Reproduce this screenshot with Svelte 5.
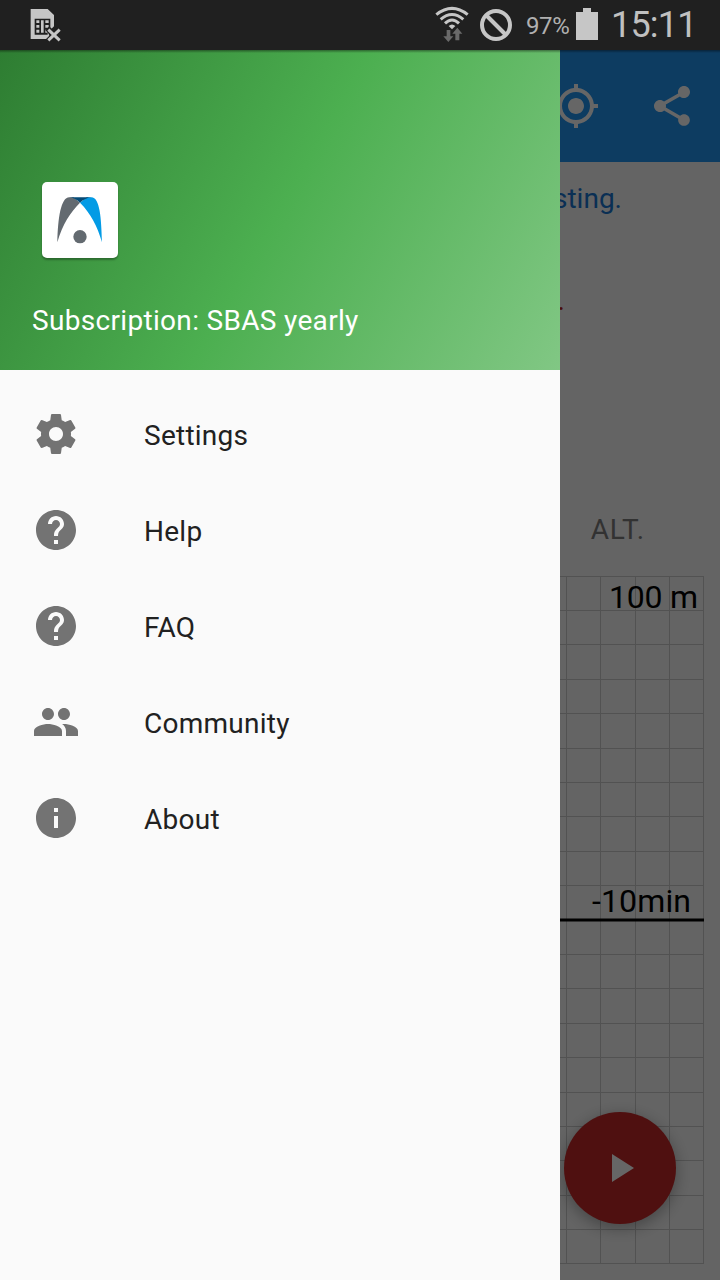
<script lang="ts">
	interface MenuItem {
		label: string;
		icon: string;
	}

	const help =
		'M12 2C6.48 2 2 6.48 2 12s4.48 10 10 10 10-4.48 10-10S17.52 2 12 2zm1 17h-2v-2h2v2zm2.07-7.75l-.9.92C13.45 12.9 13 13.5 13 15h-2v-.5c0-1.1.45-2.1 1.17-2.83l1.24-1.26c.37-.36.59-.86.59-1.41 0-1.1-.9-2-2-2s-2 .9-2 2H8c0-2.21 1.79-4 4-4s4 1.79 4 4c0 .88-.36 1.68-.93 2.25z';

	const items: MenuItem[] = [
		{
			label: 'Settings',
			icon: 'M19.43 12.98c.04-.32.07-.64.07-.98s-.03-.66-.07-.98l2.11-1.65c.19-.15.24-.42.12-.64l-2-3.46c-.12-.22-.39-.3-.61-.22l-2.49 1c-.52-.4-1.08-.73-1.69-.98l-.38-2.65C14.46 2.18 14.25 2 14 2h-4c-.25 0-.46.18-.49.42l-.38 2.65c-.61.25-1.17.59-1.69.98l-2.49-1c-.23-.09-.49 0-.61.22l-2 3.46c-.13.22-.07.49.12.64l2.11 1.65c-.04.32-.07.65-.07.98s.03.66.07.98l-2.11 1.65c-.19.15-.24.42-.12.64l2 3.46c.12.22.39.3.61.22l2.49-1c.52.4 1.08.73 1.69.98l.38 2.65c.03.24.24.42.49.42h4c.25 0 .46-.18.49-.42l.38-2.65c.61-.25 1.17-.59 1.69-.98l2.49 1c.23.09.49 0 .61-.22l2-3.46c.12-.22.07-.49-.12-.64l-2.11-1.65zM12 15.5c-1.93 0-3.5-1.57-3.5-3.5s1.57-3.5 3.5-3.5 3.5 1.57 3.5 3.5-1.57 3.5-3.5 3.5z',
		},
		{ label: 'Help', icon: help },
		{ label: 'FAQ', icon: help },
		{
			label: 'Community',
			icon: 'M16 11c1.66 0 2.99-1.34 2.99-3S17.66 5 16 5c-1.66 0-3 1.34-3 3s1.34 3 3 3zm-8 0c1.66 0 2.99-1.34 2.99-3S9.66 5 8 5C6.34 5 5 6.34 5 8s1.34 3 3 3zm0 2c-2.33 0-7 1.17-7 3.5V19h14v-2.5c0-2.33-4.67-3.5-7-3.5zm8 0c-.29 0-.62.02-.97.05 1.16.84 1.97 1.97 1.97 3.45V19h6v-2.5c0-2.33-4.67-3.5-7-3.5z',
		},
		{
			label: 'About',
			icon: 'M12 2C6.48 2 2 6.48 2 12s4.48 10 10 10 10-4.48 10-10S17.52 2 12 2zm1 15h-2v-6h2v6zm0-8h-2V7h2v2z',
		},
	];

	// 20 x 20 cells on a 688px square
	const cell = 34.4;
	const lines = Array.from({ length: 21 }, (_, i) => Math.min(Math.floor(i * cell) + 0.5, 687.5));
</script>

<div class="phone">
	<header class="status-bar">
		<svg class="sim" width="32" height="34" viewBox="0 0 96 102">
			<path fill="#c6c6c6" d="M2 0h51l19 18v34L54 70l8 20H2z" />
			<path fill="#202020" d="M14 29h47v26l-8 8v14H14z" />
			<path fill="#c6c6c6" d="M19 34h9v8h-9zM19 48h9v8h-9zM19 62h9v9h-9zM33 34h8v37h-8zM46 34h10v8H46zM46 48h10v8H46zM46 62h6v9h-6z" />
			<path stroke="#202020" stroke-width="17" d="M52 58l40 40M92 58L52 98" />
			<path stroke="#c6c6c6" stroke-width="9" d="M55 62l34 32M89 62L55 94" />
		</svg>
		<div class="status-right">
			<svg class="wifi" width="34" height="38" viewBox="0 0 102 114">
				<g fill="none" stroke="#c6c6c6" stroke-width="9">
					<path d="M4 29Q51-9 98 29" />
					<path d="M17 43Q51 14 85 43" />
					<path d="M30 55Q51 35 72 55" />
				</g>
				<path fill="#c6c6c6" d="M41 63q10-9 20 0L51 73z" />
				<path fill="#6a6a6a" d="M35 75h11v19h9l-15 17-15-17h10zM61 106V86h-9l15-18 15 18h-9v20z" />
			</svg>
			<svg class="blocked" width="32" height="32" viewBox="0 0 32 32" fill="none" stroke="#c6c6c6" stroke-width="4">
				<circle cx="16" cy="16" r="14" /><path d="M6 6l20 20" />
			</svg>
			<span class="percent">97%</span>
			<svg width="22" height="32" viewBox="0 0 22 32"><path fill="#c6c6c6" d="M7 0h8v4h7v28H0V4h7z" /></svg>
			<span class="clock">15:11</span>
		</div>
	</header>

	<div class="window">
		<main class="screen">
			<div class="toolbar">
				<svg width="48" height="48" viewBox="0 0 24 24" fill="#fff">
					<path d="M12 8c-2.21 0-4 1.79-4 4s1.79 4 4 4 4-1.79 4-4-1.79-4-4-4zm8.94 3c-.46-4.17-3.77-7.48-7.94-7.94V1h-2v2.06C6.83 3.52 3.52 6.83 3.06 11H1v2h2.06c.46 4.17 3.77 7.48 7.94 7.94V23h2v-2.06c4.17-.46 7.48-3.77 7.94-7.94H23v-2h-2.06zM12 19c-3.87 0-7-3.13-7-7s3.13-7 7-7 7 3.13 7 7-3.13 7-7 7z" />
				</svg>
				<svg width="48" height="48" viewBox="0 0 24 24" fill="#fff">
					<path d="M18 16.08c-.76 0-1.44.3-1.96.77L8.91 12.7c.05-.23.09-.46.09-.7s-.04-.47-.09-.7l7.05-4.11c.54.5 1.25.81 2.04.81 1.66 0 3-1.34 3-3s-1.34-3-3-3-3 1.34-3 3c0 .24.04.47.09.7L8.04 9.81C7.5 9.31 6.79 9 6 9c-1.66 0-3 1.34-3 3s1.34 3 3 3c.79 0 1.5-.31 2.04-.81l7.12 4.16c-.05.21-.08.43-.08.65 0 1.61 1.31 2.92 2.92 2.92 1.61 0 2.92-1.31 2.92-2.92s-1.31-2.92-2.92-2.92z" />
				</svg>
			</div>
			<p class="notice">sting.</p>
			<p class="warning">.</p>
			<div class="tab">ALT.</div>
			<svg class="chart" width="688" height="688" viewBox="0 0 688 688">
				<g stroke="#ccc">
					{#each lines as p}
						<line x1={p} y1="0" x2={p} y2="688" />
						<line x1="0" y1={p} x2="688" y2={p} />
					{/each}
				</g>
				<line x1="0" y1="344" x2="688" y2="344" stroke="#000" stroke-width="3" />
				<text x="682" y="32" text-anchor="end" textLength="89">100 m</text>
				<text x="675" y="336" text-anchor="end" textLength="99">-10min</text>
			</svg>
			<button class="fab" aria-label="Start">
				<svg width="22" height="28" viewBox="0 0 22 28" fill="#fff"><path d="M0 0v28l22-14z" /></svg>
			</button>
		</main>

		<div class="scrim"></div>

		<nav class="drawer">
			<div class="drawer-header">
				<svg class="logo" width="76" height="76" viewBox="0 0 228 228">
					<path fill="#636a70" d="M46 181C48 110 56 46 82 46h12l20 16C85 92 62 125 46 181z" />
					<path fill="#039be5" d="M180 181C178 110 174 46 148 46h-14l-20 16c32 32 52 70 66 119z" />
					<path fill="#054a75" d="M82 46h66c-12 1-24 7-34 16-10-9-20-15-32-16z" />
					<circle cx="114" cy="164" r="20" fill="#636a70" />
				</svg>
				<span class="subscription">Subscription: SBAS yearly</span>
			</div>
			<ul class="menu">
				{#each items as item}
					<li>
						<svg width="48" height="48" viewBox="0 0 24 24" fill="#737373"><path d={item.icon} /></svg>
						<span>{item.label}</span>
					</li>
				{/each}
			</ul>
		</nav>
	</div>
</div>

<style>
	:global(body) {
		margin: 0;
	}

	.phone {
		display: flex;
		flex-direction: column;
		width: 720px;
		height: 1280px;
		overflow: hidden;
		font-family: Roboto, sans-serif;
		font-size: 28px;
	}

	svg {
		display: block;
		flex-shrink: 0;
	}

	.status-bar {
		display: flex;
		justify-content: space-between;
		height: 50px;
		flex-shrink: 0;
		box-sizing: border-box;
		padding: 0 25px 0 30px;
		background: #202020;
		color: #c0c0c0;
	}

	.sim {
		margin-top: 9px;
	}

	.status-right {
		display: flex;
		align-items: center;
		height: 48px;
	}

	.wifi {
		margin-right: 11px;
	}

	.blocked {
		margin: 2px 14px 0 0;
	}

	.percent {
		width: 50px;
		font-size: 24px;
		line-height: 48px;
		letter-spacing: -0.4px;
		padding-top: 3px;
		color: #b0b0b0;
	}

	.clock {
		width: 84px;
		margin-left: 13px;
		padding-top: 2px;
		font-size: 36px;
		line-height: 48px;
		letter-spacing: -0.8px;
		white-space: nowrap;
	}

	.window {
		position: relative;
		flex: 1;
		overflow: hidden;
	}

	.window::before {
		content: '';
		position: absolute;
		z-index: 3;
		inset: 0 0 auto;
		height: 3px;
		background: linear-gradient(rgba(0, 0, 0, 0.4), transparent);
	}

	.screen {
		display: flex;
		flex-direction: column;
		height: 100%;
		background: #fafafa;
	}

	.toolbar {
		display: flex;
		align-items: center;
		justify-content: flex-end;
		gap: 48px;
		height: 112px;
		padding-right: 24px;
		background: #2196f3;
	}

	.notice,
	.warning {
		margin: 0;
		line-height: 34px;
	}

	.notice {
		padding: 20px 98px 0 0;
		text-align: right;
		color: #1976d2;
	}

	.warning {
		padding: 68px 155px 0 0;
		text-align: right;
		color: #b71c1c;
	}

	.tab {
		margin: 195px 75px 29px 0;
		line-height: 34px;
		letter-spacing: 0.9px;
		text-align: right;
		color: #7d7d7d;
	}

	.chart {
		margin-left: 16px;
		font-size: 32px;
	}

	.fab {
		position: absolute;
		right: 44px;
		bottom: 56px;
		display: flex;
		align-items: center;
		justify-content: center;
		width: 112px;
		height: 112px;
		padding: 0 0 0 6px;
		border: none;
		border-radius: 50%;
		background: #c62828;
		box-shadow: 0 4px 16px rgba(0, 0, 0, 0.32);
	}

	.scrim {
		position: absolute;
		inset: 0;
		background: rgba(0, 0, 0, 0.6);
	}

	.drawer {
		position: absolute;
		inset: 0 auto 0 0;
		width: 560px;
		background: #fafafa;
	}

	.drawer-header {
		display: flex;
		flex-direction: column;
		height: 320px;
		box-sizing: border-box;
		padding: 132px 32px 0;
		background: linear-gradient(119.74deg, #2e7d32, #4caf50 50%, #81c784);
		color: #fff;
	}

	.logo {
		margin-left: 10px;
		border-radius: 5px;
		background: #fff;
		box-shadow: 0 2px 2px rgba(0, 0, 0, 0.3);
	}

	.subscription {
		margin-top: 46px;
		line-height: 34px;
		letter-spacing: 0.32px;
	}

	.menu {
		margin: 0;
		padding: 16px 0;
		list-style: none;
	}

	.menu li {
		display: flex;
		align-items: center;
		gap: 64px;
		height: 96px;
		padding-left: 32px;
		color: #212121;
	}

	.menu span {
		padding-top: 2px;
		letter-spacing: 0.25px;
	}
</style>
